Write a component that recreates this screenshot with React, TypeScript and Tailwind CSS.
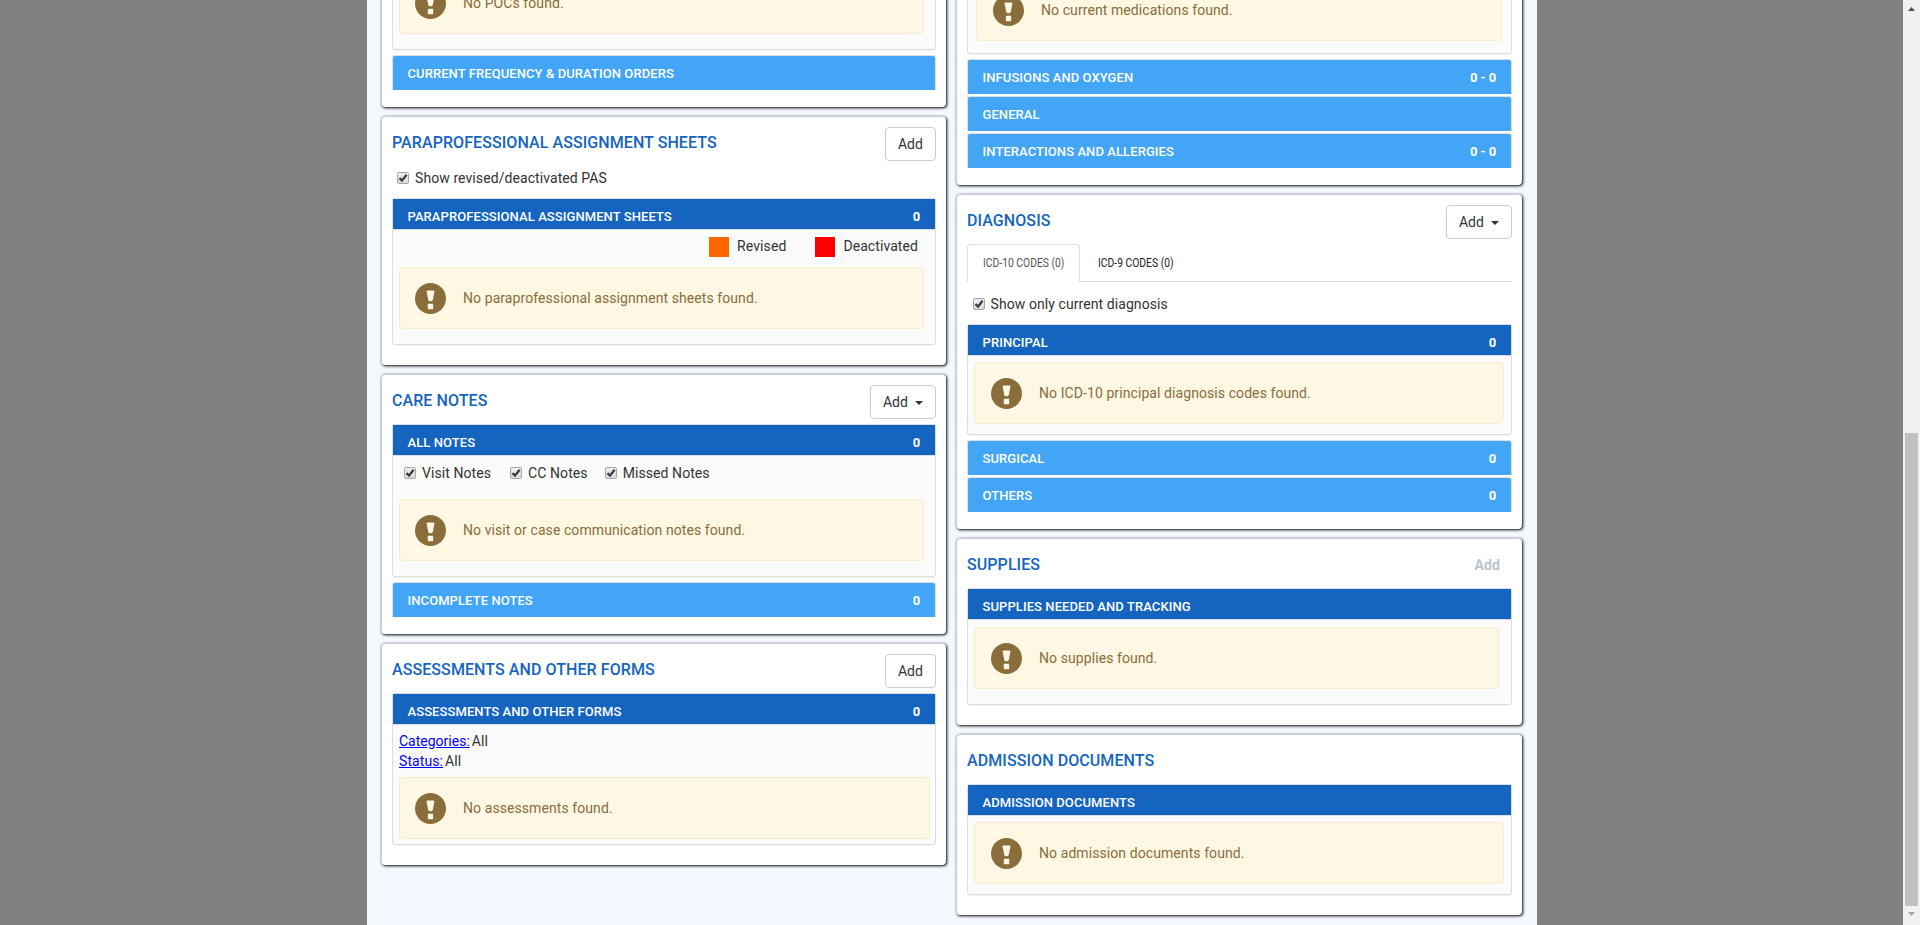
import type { ReactNode } from "react";

const AlertIcon = () => (
  <svg className="h-[31px] w-[31px] shrink-0" viewBox="23 23 1154 1154" fill="#8a6d3b">
    <path
      transform="translate(0 1200) scale(1 -1)"
      fillRule="evenodd"
      d="M600 1177q117 0 224-45.500t184.500-123t123-184.500t45.500-224t-45.500-224t-123-184.500t-184.500-123t-224-45.500t-224 45.500t-184.500 123t-123 184.500t-45.500 224t45.500 224t123 184.500t184.500 123t224 45.500zM704 900h-208q-20 0-32-14.500t-8-34.500l58-302q4-20 21.500-34.500t37.500-14.500h54q20 0 37.500 14.500t21.500 34.500l58 302q4 20-8 34.500t-32 14.500zM675 400h-150q-10 0-17.500-7.500t-7.500-17.500v-150q0-10 7.500-17.500t17.500-7.500h150q10 0 17.500 7.500t7.500 17.500v150q0 10-7.500 17.500t-17.500 7.500z"
    />
  </svg>
);

const Alert = ({ children, className = "pl-[15px]" }: { children: ReactNode; className?: string }) => (
  <div className={`flex h-[62px] shrink-0 items-center rounded border border-[#faebcc] bg-[#fdf7e3] text-[#8a6d3b] ${className}`}>
    <AlertIcon />
    <span className="ml-[17px] whitespace-nowrap">{children}</span>
  </div>
);

const Card = ({ children, className = "" }: { children: ReactNode; className?: string }) => (
  <section className={`mb-[9px] shrink-0 rounded border-t border-l border-[#c6cdd6] bg-white px-[10px] shadow-[1px_1px_3px_#000] ${className}`}>
    {children}
  </section>
);

const CardHeader = ({ title, children, className = "h-[49px]" }: { title: string; children?: ReactNode; className?: string }) => (
  <div className={`flex items-start justify-between pt-[10px] ${className}`}>
    <h2 className="mt-[6px] text-base leading-5 font-medium whitespace-nowrap text-[#1565c0]">{title}</h2>
    {children}
  </div>
);

const Caret = () => (
  <svg className="mt-px ml-[7px] h-1 w-2" viewBox="0 0 8 4" fill="#333">
    <path d="M0 0h8L4 4z" />
  </svg>
);

const AddButton = ({ menu = false }: { menu?: boolean }) => (
  <button className={`flex h-[34px] items-center justify-center rounded border border-[#ccc] bg-white text-[#333] ${menu ? "w-[66px]" : "w-[51px]"}`}>
    Add
    {menu && <Caret />}
  </button>
);

const Bar = ({ title, count }: { title: string; count?: string }) => (
  <div className="mb-[2px] flex h-[35px] items-center justify-between rounded-t-[3px] border-x border-t border-[#ddd] bg-[#42a5f5] pt-px pr-[15px] pl-[14.500px] text-[13px] font-medium text-white">
    <span>{title}</span>
    <span className="font-bold tracking-[-0.1px]">{count}</span>
  </div>
);

const Panel = ({ title, count, children, className = "" }: { title?: string; count?: string; children: ReactNode; className?: string }) => (
  <div className={`mb-[5px] flex flex-col rounded-[3px] border border-[#ddd] bg-[#fbfbfb] shadow-[0_1px_1px_rgba(0,0,0,0.05)] ${className}`}>
    {title && (
      <div className="mb-px flex h-[30px] shrink-0 items-end justify-between bg-[#1565c0] pr-[15px] pb-[3px] pl-[14.500px] text-[13px] leading-[18px] font-medium text-white shadow-[0_1px_0_#ddd]">
        <span>{title}</span>
        <span className="font-bold tracking-[-0.1px]">{count}</span>
      </div>
    )}
    {children}
  </div>
);

const Check = ({ label, className = "" }: { label: string; className?: string }) => (
  <label className={`flex items-center text-[#333] ${className}`}>
    <span className="mr-[6px] flex h-3 w-3 items-center justify-center rounded-[2px] border border-[#a6a6a6] bg-linear-to-b from-[#eee] to-[#dcdcdc]">
      <svg className="h-[10px] w-[10px]" viewBox="0 0 10 10" fill="none" stroke="#3c3c3c" strokeWidth="2.3">
        <path d="M1.500 5.200 4 7.600 8.600 1.700" />
      </svg>
    </span>
    {label}
  </label>
);

const Swatch = ({ label, color }: { label: string; color: string }) => (
  <span className="flex items-start">
    <span className={`mr-[8px] h-5 w-5 ${color}`} />
    <span className="leading-[18px]">{label}</span>
  </span>
);

export default function App() {
  return (
    <div className="flex h-[925px] w-full overflow-hidden bg-[#808080] font-[Roboto,sans-serif] text-sm leading-5 tracking-[0.08px] text-[#333]">
      <main className="ml-[367px] flex h-[925px] w-[1170px] shrink-0 gap-[10px] overflow-hidden bg-[#f4f9ff] pl-[14px]">
        <div className="flex w-[565px] shrink-0 flex-col">
          <Card className="-mt-[60px] h-[167px]">
            <Panel className="h-[109px] px-[6px] pt-[30px]">
              <Alert className="mr-[5px] pl-[15px]">No POCs found.</Alert>
            </Panel>
            <Bar title="CURRENT FREQUENCY & DURATION ORDERS" />
          </Card>
          <Card className="h-[249px]">
            <CardHeader title="PARAPROFESSIONAL ASSIGNMENT SHEETS" className="h-[51px]">
              <AddButton />
            </CardHeader>
            <Check label="Show revised/deactivated PAS" className="h-[30px] pb-[10px] pl-[5px]" />
            <Panel title="PARAPROFESSIONAL ASSIGNMENT SHEETS" count="0" className="h-[147px]">
              <div className="flex h-[37px] shrink-0 items-start justify-end gap-[29px] pt-[7px] pr-[17px]">
                <Swatch label="Revised" color="bg-[#ff6600]" />
                <Swatch label="Deactivated" color="bg-[#ff0000]" />
              </div>
              <Alert className="mr-[11px] ml-[6px] pl-[15px]">No paraprofessional assignment sheets found.</Alert>
            </Panel>
          </Card>
          <Card className="h-[260px]">
            <CardHeader title="CARE NOTES">
              <AddButton menu />
            </CardHeader>
            <Panel title="ALL NOTES" count="0" className="h-[153px]">
              <div className="flex h-[43px] shrink-0 items-start pt-[7px] pl-[11px]">
                <Check label="Visit Notes" className="mr-[19px]" />
                <Check label="CC Notes" className="mr-[17px]" />
                <Check label="Missed Notes" />
              </div>
              <Alert className="mr-[11px] ml-[6px] pl-[15px]">No visit or case communication notes found.</Alert>
            </Panel>
            <Bar title="INCOMPLETE NOTES" count="0" />
          </Card>
          <Card className="h-[222px]">
            <CardHeader title="ASSESSMENTS AND OTHER FORMS">
              <AddButton />
            </CardHeader>
            <Panel title="ASSESSMENTS AND OTHER FORMS" count="0" className="h-[152px]">
              <div className="flex h-[52px] shrink-0 flex-col pt-[6px] pl-[6px]">
                <div className="flex gap-[2px]"><a className="tracking-normal text-[#0000ff] underline">Categories:</a><span>All</span></div>
                <div className="flex gap-[2px]"><a className="text-[#0000ff] underline">Status:</a><span>All</span></div>
              </div>
              <Alert className="mr-[5px] ml-[6px] pl-[15px]">No assessments found.</Alert>
            </Panel>
          </Card>
        </div>
        <div className="flex w-[566px] shrink-0 flex-col">
          <Card className="-mt-[60px] h-[245px]">
            <Panel className="h-[113px] pt-[37px]">
              <Alert className="mr-[9px] ml-[8px] pl-4">No current medications found.</Alert>
            </Panel>
            <Bar title="INFUSIONS AND OXYGEN" count="0 - 0" />
            <Bar title="GENERAL" />
            <Bar title="INTERACTIONS AND ALLERGIES" count="0 - 0" />
          </Card>
          <Card className="h-[335px]">
            <CardHeader title="DIAGNOSIS">
              <AddButton menu />
            </CardHeader>
            <div className="flex h-[38px] items-end border-b border-[#ddd] text-xs tracking-normal whitespace-nowrap">
              <div className="-mb-px flex h-[38px] w-[113px] items-center rounded-t border border-[#ddd] border-b-white bg-white pl-[15px] text-[#555]">
                <span className="origin-left scale-x-[0.86]">ICD-10 CODES (0)</span>
              </div>
              <div className="flex h-[37px] items-center pl-[18px] text-[#222]">
                <span className="origin-left scale-x-[0.86]">ICD-9 CODES (0)</span>
              </div>
            </div>
            <Check label="Show only current diagnosis" className="h-[42px] pt-px pl-[5.500px]" />
            <Panel title="PRINCIPAL" count="0" className="h-[111px]">
              <Alert className="mt-[6px] mr-[7px] ml-[6px] pl-4">No ICD-10 principal diagnosis codes found.</Alert>
            </Panel>
            <Bar title="SURGICAL" count="0" />
            <Bar title="OTHERS" count="0" />
          </Card>
          <Card className="h-[187px]">
            <CardHeader title="SUPPLIES">
              <span className="mt-[6px] mr-3 font-bold text-[#bcc3d0]">Add</span>
            </CardHeader>
            <Panel title="SUPPLIES NEEDED AND TRACKING" className="h-[117px]">
              <Alert className="mt-[7px] mr-[12px] ml-[6px] pl-4">No supplies found.</Alert>
            </Panel>
          </Card>
          <Card className="h-[181px]">
            <CardHeader title="ADMISSION DOCUMENTS" />
            <Panel title="ADMISSION DOCUMENTS" className="h-[111px]">
              <Alert className="mt-[6px] mr-[7px] ml-[6px] pl-4">No admission documents found.</Alert>
            </Panel>
          </Card>
        </div>
      </main>
      <div className="ml-auto flex w-[17px] shrink-0 flex-col items-center bg-[#f1f1f1]">
        <svg className="mt-[7px] h-1 w-[7px] shrink-0" viewBox="0 0 7 4" fill="#505050"><path d="M3.500 0 7 4H0z" /></svg>
        <div className="mt-[422px] h-[473px] w-[13px] shrink-0 bg-[#c1c1c1]" />
        <svg className="mt-[6px] h-1 w-[7px] shrink-0" viewBox="0 0 7 4" fill="#a3a3a3"><path d="M0 0h7L3.500 4z" /></svg>
      </div>
    </div>
  );
}
